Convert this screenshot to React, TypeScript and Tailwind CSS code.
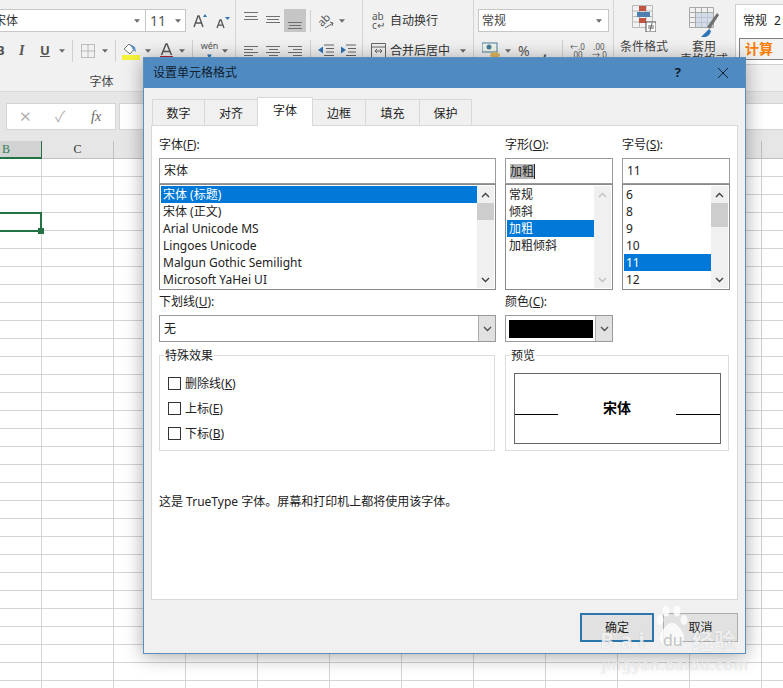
import type { ReactNode } from 'react';

const rowList = Array.from({ length: 30 }, (_, i) => i);
const colList = Array.from({ length: 10 }, (_, i) => i);

const Caret = ({ className = 'ml-[6px]' }: { className?: string }) => (
    <svg width="6" height="4" viewBox="0 0 7 4" className={className}>
        <path d="M0 0h7L3.5 4z" fill="#6a6a6a" />
    </svg>
);

const Chevron = ({ up, color = '#505050' }: { up?: boolean; color?: string }) => (
    <svg width="9" height="6" viewBox="0 0 9 6">
        <path d={up ? 'M1 5l3.5-3.5L8 5' : 'M1 1l3.5 3.5L8 1'} fill="none" stroke={color} strokeWidth="1.4" />
    </svg>
);

// horizontal text lines, used by the alignment buttons
const Lines = ({ rows, h }: { rows: [number, number, number][]; h: number }) => (
    <svg width="15" height={h} viewBox={`0 0 15 ${h}`} className="block">
        {rows.map(([x, y, w]) => (
            <rect key={y} x={x} y={y} width={w} height="1" fill="#707070" />
        ))}
    </svg>
);

const Sep = ({ className }: { className: string }) => <div className={`w-px h-[22px] bg-[#d0d0d0] ${className}`} />;

const FontGroup = () => (
    <div className="w-[236px] shrink-0 h-full border-r border-[#d4d4d4] flex flex-col pt-[9px]">
        <div className="flex items-center h-[23px]">
            <div className="w-[147px] h-[23px] -ml-px bg-white border border-[#c6c6c6] flex items-center justify-between pr-[5px] overflow-hidden">
                <span className="-ml-[6px] text-[12px] text-[#333]">宋体</span>
                <Caret className="" />
            </div>
            <div className="w-[40px] h-[23px] bg-white border border-l-0 border-[#c6c6c6] flex items-center justify-between px-[4px]">
                <span className="text-[14px] text-[#555]">11</span>
                <Caret className="" />
            </div>
            <svg width="15" height="15" viewBox="0 0 15 15" className="ml-[7px]">
                <path d="M1 14L5 3h1l4 11M2.800 10h5.400" fill="none" stroke="#555" strokeWidth="1.400" />
                <path d="M10 4l2-3 2 3z" fill="#2f75b5" />
            </svg>
            <svg width="14" height="13" viewBox="0 0 14 13" className="ml-[8px] mt-[3px]">
                <path d="M1 12l3-8h1l3 8M2.300 9.200h4.400" fill="none" stroke="#555" strokeWidth="1.300" />
                <path d="M9 1h5l-2.500 3z" fill="#2f75b5" />
            </svg>
        </div>
        <div className="flex items-center h-[21px] mt-[8px]">
            <span className="-ml-[4px] w-[9px] text-[13px] font-bold text-[#555]">B</span>
            <span className="ml-[14px] w-[6px] font-['Liberation_Serif',serif] italic font-bold text-[14px] text-[#555]">I</span>
            <span className="ml-[15px] w-[9px] text-[13px] font-bold underline text-[#555]">U</span>
            <Caret className="ml-[10px]" />
            <Sep className="ml-[7px]" />
            <svg width="14" height="14" viewBox="0 0 14 14" className="ml-[8px]">
                <path d="M.5.5h13v13H.5zM7 .5v13M.5 7h13" fill="none" stroke="#888" strokeDasharray="1 1" />
            </svg>
            <Caret className="ml-[7px]" />
            <Sep className="ml-[7px]" />
            <svg width="18" height="19" viewBox="0 0 18 19" className="ml-[6px]">
                <path d="M2 8l5-5 5 5-4 5z" fill="#fff" stroke="#777" />
                <path d="M8 3l5 3 1 5-3-2z" fill="#5f93c8" />
                <rect x="0" y="14" width="18" height="5" fill="#f6f33a" />
            </svg>
            <Caret className="ml-[5px]" />
            <svg width="13" height="17" viewBox="0 0 13 17" className="ml-[9px]">
                <path d="M1.500 13L6 2h1l4.500 11M3.500 9.500h6" fill="none" stroke="#555" strokeWidth="1.500" />
                <rect x="0" y="14" width="13" height="2" fill="#b3263a" />
            </svg>
            <Caret className="ml-[6px]" />
            <Sep className="ml-[7px]" />
            <div className="ml-[8px] w-[17px] flex flex-col items-center">
                <span className="text-[9px] leading-[10px] text-[#555]">wén</span>
                <span className="text-[9px] leading-[9px] text-[#2f75b5]">▾</span>
            </div>
            <Caret className="ml-[4px]" />
        </div>
        <div className="text-[12px] text-[#444] text-center pr-[32px] mt-[13px] leading-[16px]">字体</div>
    </div>
);

const AlignGroup = () => (
    <div className="w-[127px] shrink-0 h-full border-r border-[#d4d4d4] flex flex-col pt-[9px]">
        <div className="flex items-center h-[23px]">
            <div className="ml-[8px]">
                <Lines h={23} rows={[[0, 3, 14], [1, 7, 12], [0, 10, 14]]} />
            </div>
            <div className="ml-[7px]">
                <Lines h={23} rows={[[0, 7, 14], [1, 10, 12], [0, 13, 14]]} />
            </div>
            <div className="ml-[3px] w-[22px] h-[23px] bg-[#c6c6c6] flex justify-center">
                <Lines h={23} rows={[[0, 13, 14], [1, 16, 12], [0, 19, 14]]} />
            </div>
            <Sep className="ml-[4px]" />
            <svg width="16" height="18" viewBox="0 0 16 18" className="ml-[7px]">
                <text x="0" y="12" fontSize="11" fill="#555" transform="rotate(-45 6 9)">ab</text>
                <path d="M7 16l8-5M12 10l3 1-1 3" fill="none" stroke="#666" />
            </svg>
            <Caret className="ml-[5px]" />
        </div>
        <div className="flex items-center h-[21px] mt-[8px]">
            <div className="ml-[8px]">
                <Lines h={21} rows={[[0, 6, 14], [0, 9, 9], [0, 12, 14], [0, 15, 9]]} />
            </div>
            <div className="ml-[7px]">
                <Lines h={21} rows={[[0, 6, 14], [3, 9, 9], [0, 12, 14], [3, 15, 9]]} />
            </div>
            <div className="ml-[7px]">
                <Lines h={21} rows={[[0, 6, 14], [5, 9, 9], [0, 12, 14], [5, 15, 9]]} />
            </div>
            <Sep className="ml-[7px]" />
            <svg width="16" height="14" viewBox="0 0 16 14" className="ml-[7px]">
                <path d="M6 1h10M8 4.500h8M8 8h8M6 11.500h10" stroke="#666" />
                <path d="M0 6l5-3.500v7z" fill="#2f75b5" />
            </svg>
            <svg width="16" height="14" viewBox="0 0 16 14" className="ml-[6px]">
                <path d="M6 1h10M8 4.500h8M8 8h8M6 11.500h10" stroke="#666" />
                <path d="M6 6L1 2.500v7z" fill="#2f75b5" />
            </svg>
        </div>
    </div>
);

const WrapGroup = () => (
    <div className="w-[111px] shrink-0 h-full border-r border-[#d4d4d4] flex flex-col pt-[9px] text-[12px] text-[#333]">
        <div className="flex items-center h-[23px]">
            <span className="ml-[9px] w-[18px] text-[10px] leading-[9px] text-[#555]">
                ab
                <br />c↵
            </span>
            <span>自动换行</span>
        </div>
        <div className="flex items-center h-[21px] mt-[8px]">
            <svg width="15" height="15" viewBox="0 0 15 15" className="ml-[8px]">
                <path d="M.5.5h14v14H.5zM.5 4h14M4 8h7M4 8l2-2M4 8l2 2M11 8L9 6M11 8l-2 2" fill="none" stroke="#666" />
            </svg>
            <span className="ml-[4px]">合并后居中</span>
            <Caret className="ml-[10px]" />
        </div>
    </div>
);

const NumberGroup = () => (
    <div className="w-[140px] shrink-0 h-full border-r border-[#d4d4d4] flex flex-col pt-[9px] text-[#555]">
        <div className="ml-[4px] w-[131px] h-[23px] bg-white border border-[#c6c6c6] flex items-center justify-between px-[3px]">
            <span className="text-[12px] text-[#444]">常规</span>
            <Caret className="mr-[3px]" />
        </div>
        <div className="flex items-center h-[21px] mt-[8px]">
            <svg width="18" height="17" viewBox="0 0 18 17" className="ml-[8px]">
                <rect x="0" y="1" width="15" height="9" fill="#eef5ea" stroke="#4d7c9c" />
                <circle cx="7" cy="5" r="2.500" fill="#4d7c9c" />
                <ellipse cx="13" cy="13" rx="5" ry="3" fill="#e0b75e" />
            </svg>
            <Caret className="ml-[5px]" />
            <span className="ml-[7px] w-[12px] text-[14px] leading-none">%</span>
            <span className="ml-[13px] w-[4px] text-[14px] font-bold leading-none">,</span>
            <Sep className="ml-[15px]" />
            <span className="ml-[7px] w-[14px] text-[8px] leading-[8px] text-center">
                ←.0
                <br />
                .00
            </span>
            <span className="ml-[8px] w-[14px] text-[8px] leading-[8px] text-center">
                .00
                <br />
                →.0
            </span>
        </div>
    </div>
);

const StyleGroup = () => (
    <div className="flex-1 h-full flex text-[12px] text-[#444]">
        <div className="w-[60px] shrink-0 flex flex-col items-center pt-[5px]">
            <svg width="24" height="27" viewBox="0 0 24 27">
                <path d="M.5.5h20v22H.5zM7.500.5v22M14 .5v22M.5 6h20M.5 11.500h20M.5 17h20" fill="none" stroke="#b8b8b8" />
                <rect x="7" y="1" width="7" height="5" fill="#c0543f" />
                <rect x="5" y="7" width="13" height="5" fill="#4d7fb0" />
                <rect x="7" y="13" width="7" height="5" fill="#c0543f" />
                <rect x="14" y="17" width="10" height="10" fill="#fff" stroke="#555" />
                <path d="M16 21h6M16 23h6M20 18l-2 8" stroke="#444" strokeWidth=".8" />
            </svg>
            <span className="mt-[8px] leading-[14px] whitespace-nowrap">条件格式</span>
        </div>
        <div className="w-[60px] shrink-0 flex flex-col items-center pt-[7px]">
            <svg width="30" height="30" viewBox="0 0 30 30">
                <path d="M.5.5h24v20H.5zM6.500.5v20M12.500.5v20M18.500.5v20M.5 5.500h24M.5 10.500h24M.5 15.500h24" fill="none" stroke="#a8a8a8" />
                <path d="M7 6h17v14H7z" fill="#c4d2e2" opacity=".7" />
                <path d="M18 20l10-14 2 2-9 14z" fill="#707070" />
                <path d="M20 22l-8 8c3 1 9 0 10-6z" fill="#2f75b5" />
            </svg>
            <span className="mt-[3px] leading-[13px] whitespace-nowrap">套用</span>
            <span className="leading-[13px] whitespace-nowrap">表格格式</span>
        </div>
        <div className="ml-px flex-1 h-[61px] mt-[4px] bg-white border border-r-0 border-[#d0d0d0] pl-[7px] pt-[8px] overflow-hidden">
            <div className="leading-[15px] whitespace-nowrap text-[#222]">
                常规<span className="ml-[7px]">2</span>
            </div>
            <div className="-ml-[4px] mt-[10px] h-[22px] bg-[#f2f2f2] border border-r-0 border-[#7f7f7f] pl-[5px] text-[14px] font-bold text-[#fa7d00] leading-[20px]">
                计算
            </div>
        </div>
    </div>
);

const Sheet = () => (
    <div className="w-[783px] h-[688px] flex flex-col bg-white">
        <div className="h-[92px] shrink-0 flex bg-[#f1f1f1] border-b border-[#d8d8d8]">
            <FontGroup />
            <AlignGroup />
            <WrapGroup />
            <NumberGroup />
            <StyleGroup />
        </div>
        <div className="h-[49px] shrink-0 bg-[#e6e6e6] flex items-start pt-[11px]">
            <div className="ml-[6px] w-[110px] h-[27px] bg-white border border-[#d4d4d4] flex items-center text-[#b4b4b4]">
                <span className="ml-[12px] w-[14px] text-[15px]">✕</span>
                <span className="ml-[22px] w-[14px] text-[15px]">✓</span>
                <span className="ml-[22px] font-['Liberation_Serif',serif] italic text-[14px] text-[#666]">fx</span>
            </div>
            <div className="ml-[3px] flex-1 h-[27px] bg-white border border-r-0 border-[#d4d4d4]" />
        </div>
        <div className="h-[18px] shrink-0 flex bg-[#e6e6e6] text-[12px] leading-[16px] font-['Liberation_Serif',serif]">
            <div className="w-[42px] shrink-0 bg-[#d2d2d2] border-b-2 border-r border-[#217346] text-[#2f7d55] pl-[2px]">B</div>
            <div className="w-[72px] shrink-0 border-r border-b border-[#c0c0c0] text-center text-[#333]">C</div>
            {colList.map((c) => (
                <div key={c} className="w-[72px] shrink-0 border-r border-b border-[#c0c0c0]" />
            ))}
        </div>
        {rowList.map((r) => (
            <div key={r} className="h-[18px] shrink-0 flex">
                <div className="w-[42px] shrink-0 border-r border-b border-[#d4d4d4]" />
                <div className="w-[72px] shrink-0 border-r border-b border-[#d4d4d4]" />
                {colList.map((c) => (
                    <div key={c} className="w-[72px] shrink-0 border-r border-b border-[#d4d4d4]" />
                ))}
            </div>
        ))}
    </div>
);

const tabs = ['数字', '对齐', '字体', '边框', '填充', '保护'];
const tabWidths = ['w-[53px]', 'w-[54px]', 'w-[56px]', 'w-[54px]', 'w-[55px]', 'w-[53px]'];

const Key = ({ label, k, tail = '' }: { label: string; k: string; tail?: string }) => (
    <span>
        {label}(<span className="underline">{k}</span>){tail}
    </span>
);

const Field = ({ children }: { children: ReactNode }) => (
    <div className="h-[20px] leading-[14px] text-[12px] text-[#222]">{children}</div>
);

const Scroll = ({ thumb, off }: { thumb?: string; off?: boolean }) => (
    <div className="w-[17px] shrink-0 h-full bg-[#f0f0f0] flex flex-col items-center">
        <div className="h-[17px] shrink-0 flex items-center justify-center">
            <Chevron up color={off ? '#c0c0c0' : '#404040'} />
        </div>
        {thumb ? <div className={`w-full bg-[#cdcdcd] shrink-0 ${thumb}`} /> : null}
        <div className="flex-1" />
        <div className="h-[17px] shrink-0 flex items-center justify-center">
            <Chevron color={off ? '#c0c0c0' : '#404040'} />
        </div>
    </div>
);

const ListBox = ({
    items,
    selected,
    thumb,
    off,
}: {
    items: string[];
    selected: number;
    thumb?: string;
    off?: boolean;
}) => (
    <div className="h-[106px] border border-[#8a8a8a] p-px flex bg-white">
        <div className="flex-1 min-w-0">
            {items.map((item, i) => (
                <div
                    key={item}
                    className={`h-[17px] leading-[17px] pl-[2px] text-[12px] whitespace-nowrap ${
                        i === selected ? 'bg-[#0078d7] text-white' : 'text-[#222]'
                    }`}
                >
                    {item}
                </div>
            ))}
        </div>
        <Scroll thumb={thumb} off={off} />
    </div>
);

const TextBox = ({ children }: { children: ReactNode }) => (
    <div className="h-[26px] border border-[#9a9a9a] bg-white flex items-center pl-[4px] text-[12px] text-[#222]">
        {children}
    </div>
);

const ComboArrow = () => (
    <div className="w-[17px] h-full shrink-0 bg-[#e1e1e1] border-l border-[#adadad] flex items-center justify-center">
        <Chevron />
    </div>
);

const Check = ({ label, k }: { label: string; k: string }) => (
    <div className="h-[25px] flex items-center pl-[8px] text-[12px] text-[#222]">
        <div className="w-[13px] h-[13px] border border-[#333] bg-white" />
        <span className="ml-[4px]">
            <Key label={label} k={k} />
        </span>
    </div>
);

const Legend = ({ children }: { children: string }) => (
    <div className="-mt-[8px] ml-[4px] w-fit h-[16px] px-px bg-white text-[12px] leading-[16px] text-[#222]">{children}</div>
);

const FontPanel = () => (
    <div className="h-[475px] mx-[7px] bg-white border border-[#d9d9d9] pl-[7px] pt-[12px]">
        <div className="grid grid-cols-[337px_108px_108px] gap-x-[9px]">
            <div>
                <Field>
                    <Key label="字体" k="F" tail=":" />
                </Field>
                <TextBox>宋体</TextBox>
                <ListBox
                    items={['宋体 (标题)', '宋体 (正文)', 'Arial Unicode MS', 'Lingoes Unicode', 'Malgun Gothic Semilight', 'Microsoft YaHei UI']}
                    selected={0}
                    thumb="h-[17px]"
                />
            </div>
            <div>
                <Field>
                    <Key label="字形" k="O" tail=":" />
                </Field>
                <TextBox>
                    <span className="bg-[#b8b8b8] leading-[15px]">加粗</span>
                    <span className="w-px h-[15px] bg-[#222]" />
                </TextBox>
                <ListBox items={['常规', '倾斜', '加粗', '加粗倾斜']} selected={2} off />
            </div>
            <div>
                <Field>
                    <Key label="字号" k="S" tail=":" />
                </Field>
                <TextBox>11</TextBox>
                <ListBox items={['6', '8', '9', '10', '11', '12']} selected={4} thumb="h-[24px]" />
            </div>
        </div>
        <div className="grid grid-cols-[337px_108px] gap-x-[9px] mt-[5px]">
            <div>
                <div className="h-[20px] leading-[14px] text-[12px] text-[#222]">
                    <Key label="下划线" k="U" tail=":" />
                </div>
                <div className="h-[27px] border border-[#9a9a9a] bg-white flex items-center justify-between pl-[4px] text-[12px] text-[#222]">
                    无
                    <ComboArrow />
                </div>
            </div>
            <div>
                <div className="h-[20px] leading-[14px] text-[12px] text-[#222]">
                    <Key label="颜色" k="C" tail=":" />
                </div>
                <div className="h-[27px] border border-[#9a9a9a] bg-white flex items-center pl-[3px]">
                    <div className="w-[84px] h-[18px] bg-black" />
                    <div className="flex-1" />
                    <ComboArrow />
                </div>
            </div>
        </div>
        <div className="flex mt-[13px]">
            <div className="w-[336px] h-[96px] border border-[#dcdcdc]">
                <Legend>特殊效果</Legend>
                <div className="mt-[7px]">
                    <Check label="删除线" k="K" />
                    <Check label="上标" k="E" />
                    <Check label="下标" k="B" />
                </div>
            </div>
            <div className="ml-[10px] w-[224px] h-[96px] border border-[#dcdcdc]">
                <Legend>预览</Legend>
                <div className="ml-[8px] mt-[9px] w-[207px] h-[71px] border border-[#666] flex items-center">
                    <div className="w-[43px] h-px mt-[12px] bg-black" />
                    <div className="flex-1 text-center text-[14px] font-bold text-black -mt-[2px]">宋体</div>
                    <div className="w-[44px] h-px mt-[12px] bg-black" />
                </div>
            </div>
        </div>
        <div className="mt-[43px] text-[12px] leading-[16px] text-[#222]">这是 TrueType 字体。屏幕和打印机上都将使用该字体。</div>
    </div>
);

const Dialog = () => (
    <div className="absolute left-[143px] top-[57px] w-[603px] h-[597px] border border-[#5b90bd] bg-[#f0f0f0] shadow-[0_2px_18px_rgba(0,0,0,0.35)] flex flex-col">
        <div className="h-[30px] shrink-0 bg-[#4f8bc1] flex items-center pl-[9px] text-[12px] text-[#10202e]">
            <span>设置单元格格式</span>
            <span className="ml-auto text-[13px] font-bold mr-[36px]">?</span>
            <svg width="12" height="12" viewBox="0 0 12 12" className="mr-[16px]">
                <path d="M1 1l10 10M11 1L1 11" stroke="#10202e" strokeWidth="1" />
            </svg>
        </div>
        <div className="flex items-end h-[37px] shrink-0 pl-[8px]">
            {tabs.map((t, i) => (
                <div
                    key={t}
                    className={`${tabWidths[i]} text-center text-[12px] text-[#222] border border-[#d9d9d9] -mr-px ${
                        i === 2
                            ? 'relative h-[29px] leading-[26px] bg-white border-b-0 -mb-px z-10'
                            : 'h-[26px] leading-[27px] border-b-0 bg-[#f0f0f0]'
                    }`}
                >
                    {t}
                </div>
            ))}
        </div>
        <FontPanel />
        <div className="flex justify-end pt-[13px] pr-[7px] text-[12px] text-[#222]">
            <button className="w-[74px] h-[29px] bg-[#e1e1e1] border-2 border-[#2b76ab]">确定</button>
            <button className="ml-[9px] w-[75px] h-[29px] bg-[#e1e1e1] border border-[#adadad]">取消</button>
        </div>
    </div>
);

// baidu watermark sits over the dialog buttons
const Watermark = () => (
    <div className="absolute left-[600px] top-[604px] w-[142px] h-[68px] text-white/80 pointer-events-none [text-shadow:0_0_1px_rgba(0,0,0,0.25)]">
        <svg width="32" height="42" viewBox="0 0 32 42" className="absolute left-[56px] top-0">
            <g fill="#fff" fillOpacity=".8">
                <ellipse cx="4" cy="16" rx="3.500" ry="5" />
                <ellipse cx="10" cy="7" rx="3.500" ry="5.500" />
                <ellipse cx="21" cy="7" rx="3.500" ry="5.500" />
                <ellipse cx="28" cy="16" rx="3.500" ry="5" />
                <path d="M16 19c5 0 8 5 11 10 3 6-1 11-5 11H10c-5 0-8-5-5-11 3-5 6-10 11-10z" />
            </g>
        </svg>
        <span className="absolute left-0 top-[25px] text-[21px] leading-[22px] font-bold tracking-[6px]">Bai</span>
        <span className="absolute left-[63px] top-[27px] text-[16px] leading-[18px] text-[#c4c4c4] [text-shadow:none]">du</span>
        <span className="absolute left-[92px] top-[25px] text-[22px] leading-[22px] font-bold whitespace-nowrap">经验</span>
        <span className="absolute left-[2px] top-[52px] text-[15px] leading-[16px] tracking-[1px] whitespace-nowrap">jingyan.baidu.com</span>
    </div>
);

export default function App() {
    return (
        <div className="relative w-[783px] h-[688px] overflow-hidden font-['Noto_Sans','Noto_Sans_CJK_SC',sans-serif]">
            <Sheet />
            {/* selected cell */}
            <div className="absolute -left-[2px] top-[212px] w-[44px] h-[20px] border-2 border-[#217346]" />
            <div className="absolute left-[38px] top-[228px] w-[6px] h-[6px] bg-[#217346]" />
            <Dialog />
            <Watermark />
        </div>
    );
}
